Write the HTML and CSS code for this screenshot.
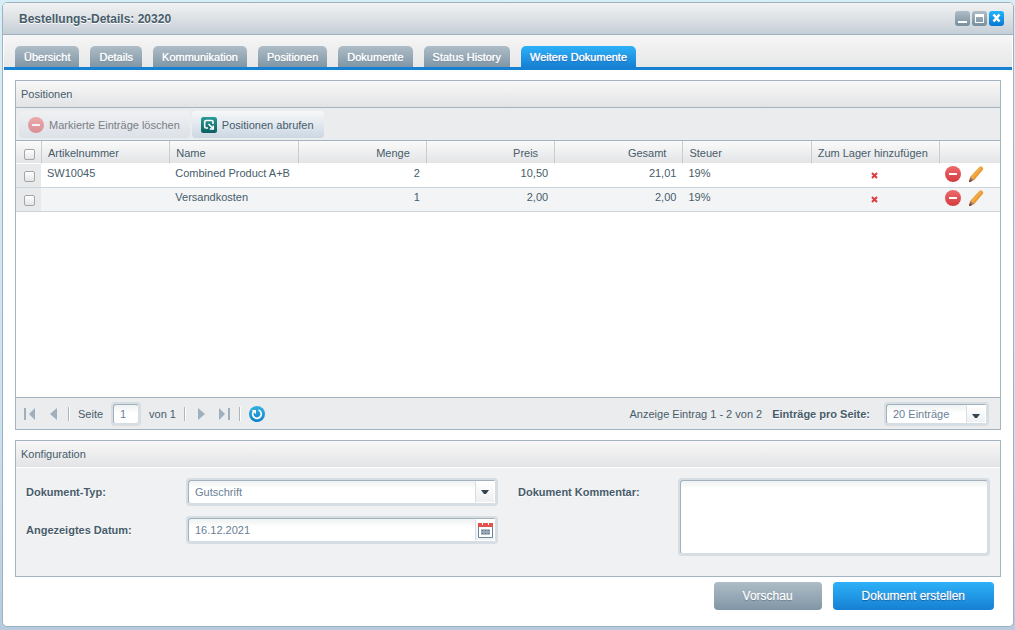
FILE: index.html
```html
<!DOCTYPE html>
<html lang="de">
<head>
<meta charset="utf-8">
<title>Bestellungs-Details: 20320</title>
<link rel="stylesheet" href="styles.css">
</head>
<body>
<svg class="defs" width="0" height="0" aria-hidden="true">
  <defs>
    <linearGradient id="red" x1="0" y1="0" x2="0" y2="1"><stop offset="0" stop-color="#ee6a6c"/><stop offset="1" stop-color="#d23c3e"/></linearGradient>
    <linearGradient id="teal" x1="0" y1="0" x2="0" y2="1"><stop offset="0" stop-color="#2a9c96"/><stop offset="1" stop-color="#0b5f60"/></linearGradient>
    <linearGradient id="blue" x1="0" y1="0" x2="0" y2="1"><stop offset="0" stop-color="#35b0e4"/><stop offset="1" stop-color="#0d84c6"/></linearGradient>
    <symbol id="minus" viewBox="0 0 16 16"><circle cx="8" cy="8" r="8" fill="url(#red)"/><rect x="4" y="7" width="8" height="2" rx=".5" fill="#fff"/></symbol>
    <symbol id="pencil" viewBox="0 0 16 16"><path d="M10.600.8Q11.600 0 12.600.6L13.900 1.800Q14.600 2.700 13.900 3.700L5.300 14 1.300 10.800Z" fill="#ea9d33"/><path d="M11.600.9 2.600 11.300l1 .9L12.700 1.600Z" fill="#f3b252"/><path d="M1.300 10.800 5.300 14 .9 15.900Q0 16 .1 15.200Z" fill="#a87558"/><path d="M.7 13.200.1 15.300Q0 16 .9 15.900L3 15Z" fill="#6d4334"/></symbol>
    <symbol id="cross" viewBox="0 0 7 7"><path d="M1 1 6 6M6 1 1 6" stroke="#db3b41" stroke-width="2"/></symbol>
  </defs>
</svg>

<main class="window">
  <header class="titlebar">
    <h1 class="title">Bestellungs-Details: 20320</h1>
    <div class="tools">
      <button class="tool" type="button" aria-label="Minimieren"><svg width="15" height="15" viewBox="0 0 15 15"><path d="M3 10h9v2H3z" fill="#fff"/></svg></button>
      <button class="tool" type="button" aria-label="Maximieren"><svg width="15" height="15" viewBox="0 0 15 15"><path d="M3 3h9v9H3zM4 6v5h7V6z" fill="#fff" fill-rule="evenodd"/></svg></button>
      <button class="tool tool-close" type="button" aria-label="Schließen"><svg width="15" height="15" viewBox="0 0 15 15"><path d="M4.500 3.500 10.500 10.500M10.500 3.500 4.500 10.500" stroke="#fff" stroke-width="2.600"/></svg></button>
    </div>
  </header>

  <nav class="tabs">
    <button class="tab" type="button">Übersicht</button>
    <button class="tab" type="button">Details</button>
    <button class="tab" type="button">Kommunikation</button>
    <button class="tab" type="button">Positionen</button>
    <button class="tab" type="button">Dokumente</button>
    <button class="tab" type="button">Status History</button>
    <button class="tab tab-active" type="button">Weitere Dokumente</button>
  </nav>

  <div class="content">
    <section class="panel panel-grid">
      <h2 class="panel-title">Positionen</h2>
      <div class="toolbar">
        <button class="action" type="button" disabled><svg width="16" height="16"><use href="#minus"/></svg>Markierte Einträge löschen</button>
        <button class="action" type="button"><svg width="16" height="16" viewBox="0 0 16 16"><rect width="16" height="16" rx="2.500" fill="url(#teal)"/><path d="M12 7V4.800Q12 3.500 10.700 3.500H5Q3.700 3.500 3.700 4.800V9.700Q3.700 11 5 11H7" fill="none" stroke="#fff" stroke-width="1.600"/><path d="M7.500 7 11.800 11.300M12.300 8.400V12H8.700" fill="none" stroke="#fff" stroke-width="1.500"/></svg>Positionen abrufen</button>
      </div>
      <div class="grid-wrap">
        <table class="grid">
          <colgroup><col class="col-check"><col><col><col><col><col><col><col><col class="col-actions"></colgroup>
          <thead>
            <tr>
              <th class="check"><input class="box" type="checkbox" aria-label="Alle auswählen"></th>
              <th>Artikelnummer</th><th>Name</th><th class="num">Menge</th><th class="num">Preis</th><th class="num">Gesamt</th><th>Steuer</th><th>Zum Lager hinzufügen</th><th></th>
            </tr>
          </thead>
          <tbody>
            <tr>
              <td class="check"><input class="box" type="checkbox" aria-label="SW10045 auswählen"></td>
              <td>SW10045</td><td>Combined Product A+B</td><td class="num">2</td><td class="num">10,50</td><td class="num">21,01</td><td>19%</td>
              <td class="flag"><svg width="7" height="7"><use href="#cross"/></svg></td>
              <td class="actions"><div class="row-actions"><button class="icon" type="button" aria-label="Löschen"><svg width="16" height="16"><use href="#minus"/></svg></button><button class="icon" type="button" aria-label="Bearbeiten"><svg width="16" height="16"><use href="#pencil"/></svg></button></div></td>
            </tr>
            <tr>
              <td class="check"><input class="box" type="checkbox" aria-label="Versandkosten auswählen"></td>
              <td></td><td>Versandkosten</td><td class="num">1</td><td class="num">2,00</td><td class="num">2,00</td><td>19%</td>
              <td class="flag"><svg width="7" height="7"><use href="#cross"/></svg></td>
              <td class="actions"><div class="row-actions"><button class="icon" type="button" aria-label="Löschen"><svg width="16" height="16"><use href="#minus"/></svg></button><button class="icon" type="button" aria-label="Bearbeiten"><svg width="16" height="16"><use href="#pencil"/></svg></button></div></td>
            </tr>
          </tbody>
        </table>
      </div>
      <footer class="paging">
        <button class="icon" type="button" aria-label="Erste Seite"><svg width="11" height="12" viewBox="0 0 11 12"><path d="M0 0h2v12H0zM11 0v12L5 6z" fill="#9fafbb"/></svg></button>
        <button class="icon icon-prev" type="button" aria-label="Vorherige Seite"><svg width="7" height="12" viewBox="0 0 7 12"><path d="M7 0v12L0 6z" fill="#9fafbb"/></svg></button>
        <span class="sep"></span>
        <label for="page">Seite</label>
        <span class="field field-page"><input id="page" class="input" type="text" value="1"></span>
        <span>von 1</span>
        <span class="sep"></span>
        <button class="icon icon-next" type="button" aria-label="Nächste Seite"><svg width="7" height="12" viewBox="0 0 7 12"><path d="M0 0v12L7 6z" fill="#9fafbb"/></svg></button>
        <button class="icon icon-last" type="button" aria-label="Letzte Seite"><svg width="11" height="12" viewBox="0 0 11 12"><path d="M9 0h2v12H9zM0 0v12L6 6z" fill="#9fafbb"/></svg></button>
        <span class="sep"></span>
        <button class="icon" type="button" aria-label="Aktualisieren"><svg width="16" height="16" viewBox="0 0 16 16"><circle cx="8" cy="8" r="8" fill="url(#blue)"/><path d="M9.500 4A4.300 4.300 0 1 1 4.700 5.200" fill="none" stroke="#fff" stroke-width="1.700"/><path d="M2.600 4H7V8.300Z" fill="#fff"/></svg></button>
        <span class="summary">Anzeige Eintrag 1 - 2 von 2</span>
        <label class="strong" for="size">Einträge pro Seite:</label>
        <span class="field field-size"><select id="size" class="input"><option>20 Einträge</option></select><span class="trigger"><svg width="8" height="4" viewBox="0 0 8 4"><path d="M0 0h8L5 4H3z" fill="#34454f"/></svg></span></span>
      </footer>
    </section>

    <section class="panel">
      <h2 class="panel-title panel-title-form">Konfiguration</h2>
      <form class="form">
        <div class="column">
          <div class="row">
            <label class="strong" for="type">Dokument-Typ:</label>
            <span class="field"><select id="type" class="input"><option>Gutschrift</option></select><span class="trigger"><svg width="8" height="4" viewBox="0 0 8 4"><path d="M0 0h8L5 4H3z" fill="#34454f"/></svg></span></span>
          </div>
          <div class="row">
            <label class="strong" for="date">Angezeigtes Datum:</label>
            <span class="field"><input id="date" class="input" type="text" value="16.12.2021"><span class="trigger"><svg width="15" height="16" viewBox="0 0 15 16"><path d="M.5 3.500h14v12H.5z" fill="#fff" stroke="#68869a"/><path d="M0 1h4v2h1V1h5v2h1V1h4v4H0z" fill="#e4514d"/><path d="M3 7h9v6H3z" fill="#b4bfcc"/><path d="M3.500 8h2v1h-2zm3 0h2v1h-2zm3 0h2v1h-2zm-6 3h2v1h-2zm3 0h2v1h-2zm3 0h2v1h-2z" fill="#61788c"/><path d="M3 9.500h9v1H3z" fill="#8192a3"/></svg></span></span>
          </div>
        </div>
        <div class="row">
          <label class="strong" for="comment">Dokument Kommentar:</label>
          <span class="field field-area"><textarea id="comment" class="input"></textarea></span>
        </div>
      </form>
    </section>

    <div class="buttons">
      <button class="button" type="button">Vorschau</button>
      <button class="button button-primary" type="button">Dokument erstellen</button>
    </div>
  </div>
</main>
</body>
</html>
```
FILE: styles.css
```css
* { box-sizing: border-box; }

body {
  display: flex;
  min-height: 100vh;
  margin: 0;
  padding: 2px 1px 3px 2px;
  background: linear-gradient(#d6eff7, #c9e2ef 70%, #b6cbdd);
  color: #475c6a;
  font: 11px/14px "Liberation Sans", Arial, sans-serif;
}

button, input, select, textarea { font: inherit; color: inherit; }
button { padding: 0; border: 0; background: none; }
svg { display: block; }
.defs { position: absolute; }
.strong { font-weight: bold; text-shadow: 0 1px 0 #fff; }

.window {
  flex: 1;
  min-width: 0;
  display: flex;
  flex-direction: column;
  border: 1px solid #9db1be;
  border-radius: 5px;
  background: #fff;
  overflow: hidden;
}

.titlebar {
  display: flex;
  align-items: center;
  justify-content: space-between;
  height: 32px;
  padding: 0 9px 0 16px;
  border-bottom: 1px solid #9db1be;
  background: linear-gradient(#f1f2f2, #dde1e4 50%, #c5ced7);
}
.title { margin: 0; font-size: 12px; font-weight: bold; text-shadow: 0 1px 0 #fff; }
.tools { display: flex; gap: 2px; }
.tool { border-radius: 3px; background: linear-gradient(#afbdc7, #768e9d); }
.tool-close { background: linear-gradient(#20b5fa, #0878d3); }

.tabs {
  display: flex;
  align-items: flex-end;
  gap: 11px;
  height: 35px;
  margin: 0 1px;
  padding: 0 11px;
  border-bottom: 3px solid #1680d3;
  background: linear-gradient(#f6f6f6, #e6e7e8);
}
.tab {
  height: 21px;
  padding: 0 9px;
  border-radius: 5px 5px 0 0;
  background: linear-gradient(#aebdc7, #8096a6);
  color: #fff;
  text-shadow: 0 0 1px #fff, 0 1px 1px #6d8290;
  white-space: nowrap;
}
.tab-active { background: linear-gradient(#2db1f8, #1680d3); text-shadow: 0 0 1px #fff, 0 1px 1px #1259ad; }

.content {
  flex: 1;
  display: flex;
  flex-direction: column;
  gap: 10px;
  padding: 10px 12px 16px;
}

.panel { border: 1px solid #a3b4c0; background: #ebecee; }
.panel-grid { flex: 1; display: flex; flex-direction: column; }
.panel-title {
  height: 27px;
  margin: 0;
  padding: 6px 5px;
  border-bottom: 1px solid #a3b4c0;
  background: linear-gradient(#f8f8f8, #e2e3e5);
  font-size: 11px;
  font-weight: normal;
}
.panel-title-form { border-bottom-color: #fff; }

.toolbar { display: flex; gap: 2px; padding: 3px 2px 2px 3px; }
.action {
  display: flex;
  align-items: center;
  gap: 5px;
  height: 27px;
  padding: 0 10px 0 9px;
  border-radius: 4px;
  background: linear-gradient(#f7f8f9, #cbd7e3);
}
.action:disabled { color: #7a8084; background: linear-gradient(#f0f1f3, #dce1e8); }
.action:disabled svg { opacity: .5; }

.grid-wrap { flex: 1; border: solid #a3b4c0; border-width: 1px 0; background: #fff; }
.grid { width: 100%; table-layout: fixed; border-collapse: separate; border-spacing: 0; }
.col-check { width: 25px; }
.col-actions { width: 61px; }
.grid th {
  height: 23px;
  padding: 1px 6px 0;
  border-left: 1px solid #c8cdd1;
  border-bottom: 1px solid #fff;
  background: linear-gradient(#fafafa, #e3e4e6);
  font-weight: normal;
  text-align: left;
  white-space: nowrap;
}
.grid th.num { padding-right: 16px; }
.grid .num { text-align: right; }
.grid td { height: 24px; padding: 2px 6px; border-bottom: 1px solid #cdd5dc; vertical-align: top; }
.grid tbody tr:nth-child(even) td { background: #f3f4f6; }
.grid th.check { padding: 4px 0 0 8px; border-left: 0; }
.grid td.check, .grid tbody tr:nth-child(even) td.check { padding: 7px 0 0 8px; background: #e8e9eb; }
.grid td.flag { padding-top: 8px; }
.grid td.flag svg { margin: 0 auto; }
.grid td.actions { padding: 2px 6px; }
.row-actions { display: flex; gap: 8px; }
.box {
  appearance: none;
  display: block;
  width: 11px;
  height: 11px;
  margin: 0;
  border: 1px solid #a4a6a8;
  border-radius: 2px;
  background: linear-gradient(#fff, #e4e4e5);
}

.paging { display: flex; align-items: center; height: 31px; padding: 0 11px 0 8px; gap: 8px; white-space: nowrap; }
.icon-prev { margin: 0 3px 0 7px; }
.icon-next { margin-left: 4px; }
.icon-last { margin: 0 1px 0 6px; }
.sep { width: 2px; height: 14px; border-left: 1px solid #adb6bd; border-right: 1px solid #fff; }
.summary { margin-left: auto; }
.paging .strong { margin: 0 6px 0 2px; }

.field {
  position: relative;
  display: block;
  flex: 1;
  height: 28px;
  border: 2px solid #d6dde3;
  border-radius: 4px;
  color: #6a8097;
}
.input {
  appearance: none;
  display: block;
  width: 100%;
  height: 100%;
  padding: 0 6px;
  border: 1px solid #a3b1bd;
  border-right-color: #d6dde3;
  border-bottom-color: #d6dde3;
  border-radius: 3px;
  background: linear-gradient(#eef2f2, #fff 8px);
  outline: 0;
  resize: none;
}
.trigger {
  position: absolute;
  inset: 1px 1px 1px auto;
  display: flex;
  align-items: center;
  justify-content: center;
  width: 20px;
  border: 1px solid #fff;
  border-left-color: #d6dde3;
  background: linear-gradient(#fff, #eeeff1);
  pointer-events: none;
}
.field-page { flex: none; width: 30px; height: 24px; }
.field-size { flex: none; width: 105px; height: 24px; }
.field-size .trigger { padding-top: 4px; }
.field-area { height: 78px; }

.form { display: grid; grid-template-columns: 1fr 1fr; gap: 20px; padding: 10px 10px 20px; background: #f0f1f3; }
.column { display: flex; flex-direction: column; gap: 10px; }
.row { display: flex; align-items: flex-start; }
.row label { width: 160px; padding-top: 7px; }

.buttons { display: flex; justify-content: flex-end; gap: 11px; margin-top: -5px; padding-right: 7px; }
.button {
  height: 28px;
  padding: 0 29px;
  border-radius: 4px;
  background: linear-gradient(#aebdc7, #8096a6);
  color: #fff;
  font-size: 12px;
  text-shadow: 0 1px 1px #637888, 0 0 1px #fff;
}
.button-primary { background: linear-gradient(#2db1f8, #1680d3); text-shadow: 0 1px 1px #0f5aa0, 0 0 1px #fff; }
```
